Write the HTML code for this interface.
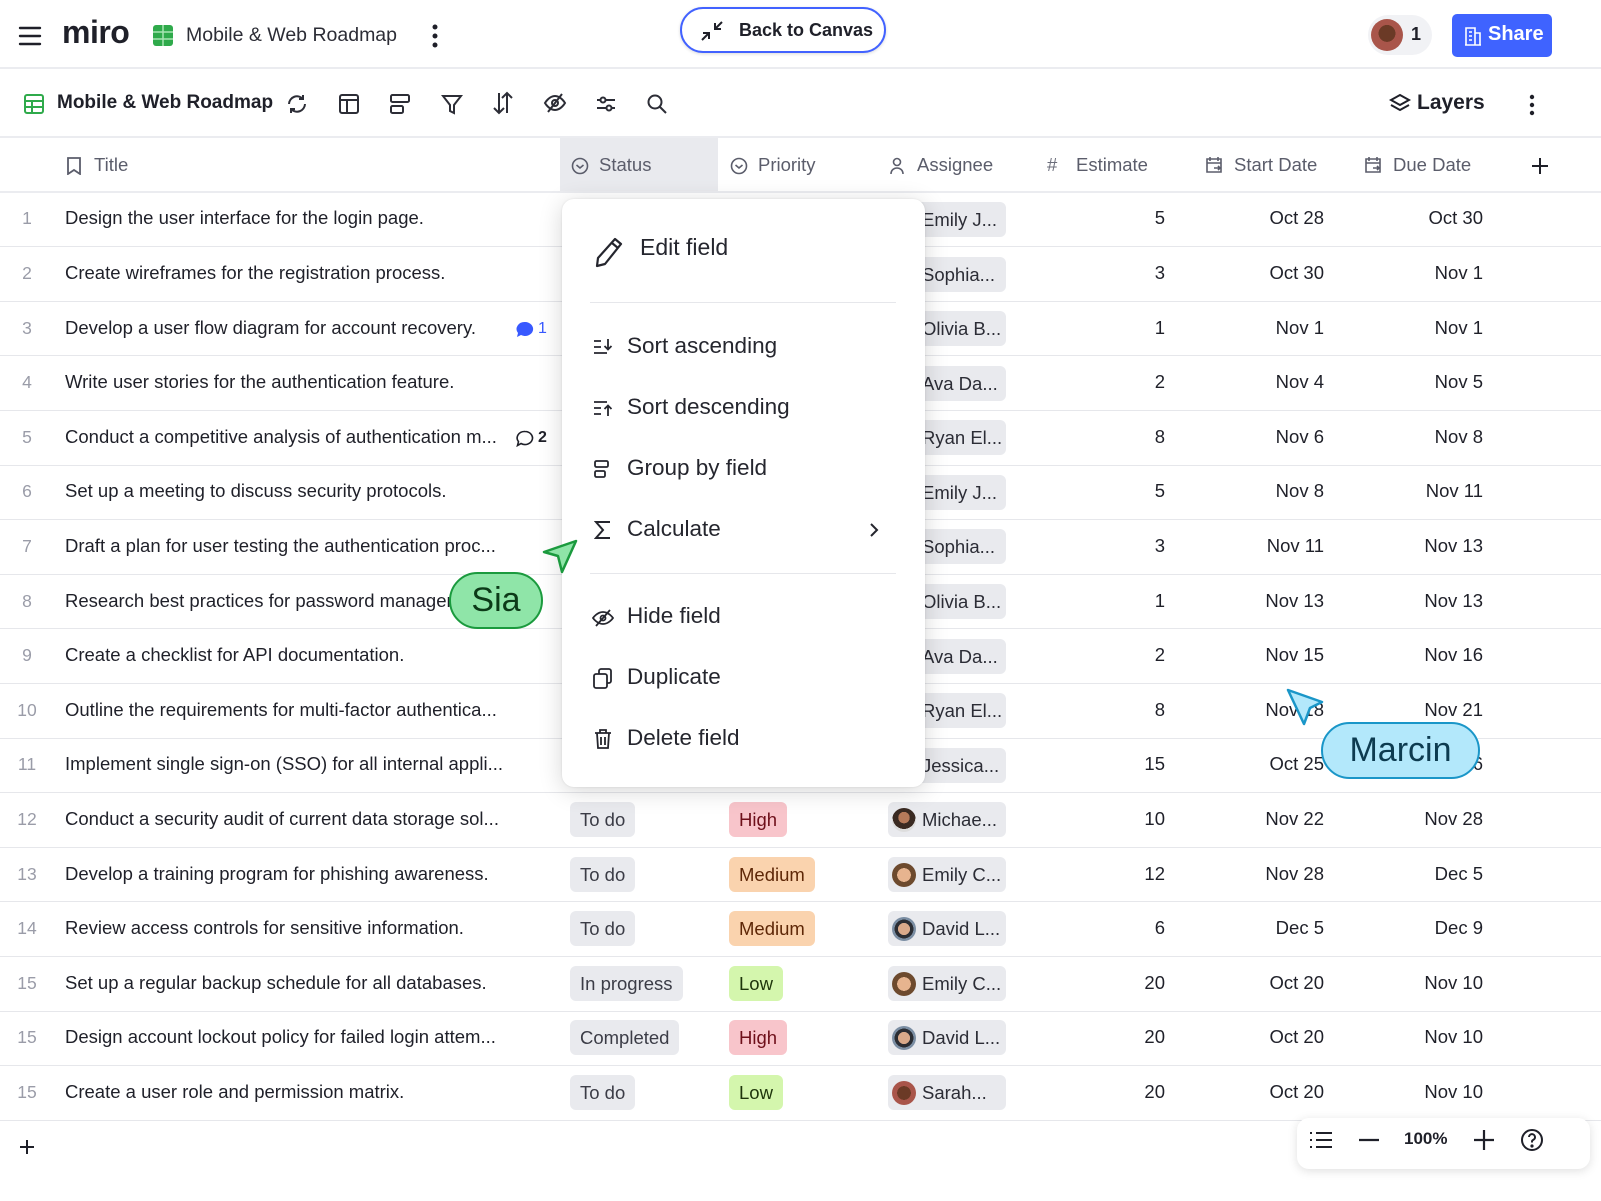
<!DOCTYPE html>
<html><head><meta charset="utf-8">
<style>
*{box-sizing:border-box;margin:0;padding:0}
body{width:1601px;height:1201px;background:#fff;font-family:"Liberation Sans",sans-serif;color:#1f2029;position:relative;overflow:hidden}
.a{position:absolute}
.hl{position:absolute;left:0;width:1601px;height:2px;background:#ebecf0}
.rl{position:absolute;left:0;width:1601px;height:1px;background:#e6e7eb}
.num{position:absolute;width:54px;text-align:center;color:#9a9ca8;font-size:17.5px}
.ttl{position:absolute;left:65px;font-size:18.5px;color:#1f2029;white-space:nowrap}
.pill{position:absolute;height:35px;border-radius:6px;padding:0 10px;font-size:18.5px;line-height:35px;white-space:nowrap}
.st{left:570px;background:#e9eaee;color:#3b3c46}
.pr{left:729px}
.hi{background:#f8c5cb;color:#6e0f1a}
.me{background:#fad3ae;color:#5e2707}
.lo{background:#d4f6ad;color:#1e350b}
.as{left:888px;width:118px;background:#e9eaee;color:#2c2d36;padding-left:34px;overflow:hidden}
.av{position:absolute;left:4px;top:6px;width:24px;height:24px;border-radius:50%}
.n{position:absolute;font-size:18.5px;text-align:right;white-space:nowrap}
.hd{position:absolute;top:154px;font-size:18.5px;color:#5b5d6b}
.mi{position:absolute;left:627px;font-size:22.5px;color:#25262e}
.ic{position:absolute}
</style></head><body>

<svg class="a" style="left:18px;top:25px" width="24" height="22" viewBox="0 0 24 22"><path d="M2 3h20M2 11h20M2 19h20" stroke="#1f2029" stroke-width="2.4" stroke-linecap="round"/></svg>
<div class="a" style="left:62px;top:14px;font-size:32px;font-weight:bold;letter-spacing:-0.5px;color:#1f2029">miro</div>
<svg class="a" style="left:153px;top:25px" width="20" height="21" viewBox="0 0 20 21"><rect x="0" y="0" width="20" height="21" rx="3" fill="#2faa4b"/><path d="M0 7h20M0 14h20M10 0v21" stroke="#a7e5b2" stroke-width="1.5"/></svg>
<div class="a" style="left:186px;top:24px;font-size:19.5px;color:#2c2d36">Mobile &amp; Web Roadmap</div>
<svg class="a" style="left:430px;top:23px" width="10" height="26"><circle cx="5" cy="4" r="2.5" fill="#1f2029"/><circle cx="5" cy="13" r="2.5" fill="#1f2029"/><circle cx="5" cy="22" r="2.5" fill="#1f2029"/></svg>
<div class="a" style="left:680px;top:7px;width:206px;height:46px;border:2px solid #4262ff;border-radius:23px;box-shadow:0 1px 3px rgba(0,0,0,.15)"></div>
<svg class="a" style="left:699px;top:19px" width="26" height="24" viewBox="0 0 26 24"><path d="M3 21l7-7M4 14h6v6M23 3l-7 7M22 10h-6V4" stroke="#1f2029" stroke-width="2" fill="none"/></svg>
<div class="a" style="left:739px;top:20px;font-size:18px;font-weight:bold;color:#1f2029">Back to Canvas</div>
<div class="a" style="left:1368px;top:15px;width:64px;height:40px;border-radius:20px;background:#f1f2f5"></div>
<div class="a" style="left:1371px;top:19px;width:32px;height:32px;border-radius:50%;background:radial-gradient(circle at 50% 45%,#6b3a26 0 35%,#a9554a 36%)"></div>
<div class="a" style="left:1411px;top:24px;font-size:18px;font-weight:bold">1</div>
<div class="a" style="left:1452px;top:14px;width:100px;height:43px;border-radius:5px;background:#3f63ff"></div>
<svg class="a" style="left:1464px;top:26px" width="18" height="20" viewBox="0 0 18 20"><path d="M2 19V2h9v17M11 7h5v12M1 19h16M5 6h3M5 10h3M5 14h3" stroke="#fff" stroke-width="1.6" fill="none"/></svg>
<div class="a" style="left:1488px;top:23px;font-size:20px;font-weight:bold;color:#fff">Share</div>
<div class="hl" style="top:67px"></div>

<svg class="a" style="left:24px;top:94px" width="20" height="20" viewBox="0 0 20 20"><rect x="1" y="1" width="18" height="18" rx="2" fill="none" stroke="#2faa4b" stroke-width="2"/><path d="M1 7h18M1 13h18M8 7v12" stroke="#2faa4b" stroke-width="2"/></svg>
<div class="a" style="left:57px;top:92px;font-size:19px;font-weight:bold;color:#1f2029">Mobile &amp; Web Roadmap</div>
<svg class="a" style="left:285px;top:92px" width="24" height="24" viewBox="0 0 24 24" fill="none" stroke="#2c2d36" stroke-width="2"><path d="M4 12a8 8 0 0 1 14-5M20 12a8 8 0 0 1-14 5M18 3v4h-4M6 21v-4h4"/></svg>
<svg class="a" style="left:338px;top:93px" width="22" height="22" viewBox="0 0 22 22" fill="none" stroke="#2c2d36" stroke-width="2"><rect x="2" y="2" width="18" height="18" rx="2"/><path d="M2 7h18M9 7v13"/></svg>
<svg class="a" style="left:389px;top:93px" width="22" height="22" viewBox="0 0 22 22" fill="none" stroke="#2c2d36" stroke-width="2"><rect x="2" y="2" width="18" height="7" rx="1.5"/><rect x="2" y="13" width="12" height="7" rx="1.5"/></svg>
<svg class="a" style="left:441px;top:93px" width="22" height="22" viewBox="0 0 22 22" fill="none" stroke="#2c2d36" stroke-width="2"><path d="M2 3h18l-7 9v8l-4-2v-6z"/></svg>
<svg class="a" style="left:492px;top:91px" width="22" height="24" viewBox="0 0 22 24" fill="none" stroke="#2c2d36" stroke-width="2"><path d="M7 2v20M2 17l5 5 5-5M15 22V2M10 7l5-5 5 5"/></svg>
<svg class="a" style="left:543px;top:92px" width="24" height="22" viewBox="0 0 24 22" fill="none" stroke="#2c2d36" stroke-width="2"><path d="M2 11s4-7 10-7 10 7 10 7-4 7-10 7S2 11 2 11z"/><circle cx="12" cy="11" r="3"/><path d="M19 2L5 20"/></svg>
<svg class="a" style="left:595px;top:94px" width="22" height="20" viewBox="0 0 22 20" fill="none" stroke="#2c2d36" stroke-width="2"><path d="M2 6h18M2 14h18"/><circle cx="8" cy="6" r="2.5" fill="#fff"/><circle cx="14" cy="14" r="2.5" fill="#fff"/></svg>
<svg class="a" style="left:646px;top:93px" width="22" height="22" viewBox="0 0 22 22" fill="none" stroke="#2c2d36" stroke-width="2"><circle cx="9" cy="9" r="6.5"/><path d="M14 14l6 6"/></svg>
<svg class="a" style="left:1388px;top:93px" width="24" height="22" viewBox="0 0 24 22" fill="none" stroke="#1f2029" stroke-width="2"><path d="M12 2l9 5-9 5-9-5z"/><path d="M3 12l9 5 9-5"/></svg>
<div class="a" style="left:1417px;top:91px;font-size:21px;font-weight:bold;color:#1f2029">Layers</div>
<svg class="a" style="left:1527px;top:94px" width="10" height="22"><circle cx="5" cy="3" r="2.2" fill="#1f2029"/><circle cx="5" cy="11" r="2.2" fill="#1f2029"/><circle cx="5" cy="19" r="2.2" fill="#1f2029"/></svg>
<div class="hl" style="top:136px"></div>

<div class="a" style="left:560px;top:138px;width:158px;height:54px;background:#e9eaee"></div>
<svg class="a" style="left:66px;top:157px" width="16" height="18" viewBox="0 0 16 18" fill="none" stroke="#5b5d6b" stroke-width="1.8"><path d="M2 1h12v16l-6-4-6 4z"/></svg>
<div class="hd" style="left:94px">Title</div>
<svg class="a" style="left:571px;top:157px" width="18" height="18" viewBox="0 0 18 18" fill="none" stroke="#5b5d6b" stroke-width="1.6"><circle cx="9" cy="9" r="7.5"/><path d="M5.5 8l3.5 3 3.5-3"/></svg>
<div class="hd" style="left:599px">Status</div>
<svg class="a" style="left:730px;top:157px" width="18" height="18" viewBox="0 0 18 18" fill="none" stroke="#5b5d6b" stroke-width="1.6"><circle cx="9" cy="9" r="7.5"/><path d="M5.5 8l3.5 3 3.5-3"/></svg>
<div class="hd" style="left:758px">Priority</div>
<svg class="a" style="left:889px;top:157px" width="16" height="18" viewBox="0 0 16 18" fill="none" stroke="#5b5d6b" stroke-width="1.6"><circle cx="8" cy="5" r="3.5"/><path d="M2 17c0-4 3-6 6-6s6 2 6 6"/></svg>
<div class="hd" style="left:917px">Assignee</div>
<div class="hd" style="left:1047px;color:#6b6d7a">#</div>
<div class="hd" style="left:1076px">Estimate</div>
<svg class="a" style="left:1205px;top:156px" width="18" height="18" viewBox="0 0 18 18" fill="none" stroke="#5b5d6b" stroke-width="1.6"><path d="M2 3h14v13H2zM2 7h14M5 1v4M13 1v4M9 12h6M13 10l2 2-2 2"/></svg>
<div class="hd" style="left:1234px">Start Date</div>
<svg class="a" style="left:1364px;top:156px" width="18" height="18" viewBox="0 0 18 18" fill="none" stroke="#5b5d6b" stroke-width="1.6"><path d="M2 3h14v13H2zM2 7h14M5 1v4M13 1v4M9 12h6M13 10l2 2-2 2"/></svg>
<div class="hd" style="left:1393px">Due Date</div>
<svg class="a" style="left:1531px;top:157px" width="18" height="18"><path d="M9 1v16M1 9h16" stroke="#1f2029" stroke-width="2"/></svg>
<div class="hl" style="top:191px"></div>

<div class="rl" style="top:246px"></div><div class="rl" style="top:301px"></div><div class="rl" style="top:355px"></div><div class="rl" style="top:410px"></div><div class="rl" style="top:465px"></div><div class="rl" style="top:519px"></div><div class="rl" style="top:574px"></div><div class="rl" style="top:628px"></div><div class="rl" style="top:683px"></div><div class="rl" style="top:738px"></div><div class="rl" style="top:792px"></div><div class="rl" style="top:847px"></div><div class="rl" style="top:901px"></div><div class="rl" style="top:956px"></div><div class="rl" style="top:1011px"></div><div class="rl" style="top:1065px"></div><div class="rl" style="top:1120px"></div>

<div class="num" style="top:208px">1</div><div class="ttl" style="top:207px">Design the user interface for the login page.</div>
<div class="num" style="top:263px">2</div><div class="ttl" style="top:262px">Create wireframes for the registration process.</div>
<div class="num" style="top:318px">3</div><div class="ttl" style="top:317px">Develop a user flow diagram for account recovery.</div>
<div class="num" style="top:372px">4</div><div class="ttl" style="top:371px">Write user stories for the authentication feature.</div>
<div class="num" style="top:427px">5</div><div class="ttl" style="top:426px">Conduct a competitive analysis of authentication m...</div>
<div class="num" style="top:481px">6</div><div class="ttl" style="top:480px">Set up a meeting to discuss security protocols.</div>
<div class="num" style="top:536px">7</div><div class="ttl" style="top:535px">Draft a plan for user testing the authentication proc...</div>
<div class="num" style="top:591px">8</div><div class="ttl" style="top:590px">Research best practices for password management.</div>
<div class="num" style="top:645px">9</div><div class="ttl" style="top:644px">Create a checklist for API documentation.</div>
<div class="num" style="top:700px">10</div><div class="ttl" style="top:699px">Outline the requirements for multi-factor authentica...</div>
<div class="num" style="top:754px">11</div><div class="ttl" style="top:753px">Implement single sign-on (SSO) for all internal appli...</div>
<div class="num" style="top:809px">12</div><div class="ttl" style="top:808px">Conduct a security audit of current data storage sol...</div>
<div class="num" style="top:864px">13</div><div class="ttl" style="top:863px">Develop a training program for phishing awareness.</div>
<div class="num" style="top:918px">14</div><div class="ttl" style="top:917px">Review access controls for sensitive information.</div>
<div class="num" style="top:973px">15</div><div class="ttl" style="top:972px">Set up a regular backup schedule for all databases.</div>
<div class="num" style="top:1027px">15</div><div class="ttl" style="top:1026px">Design account lockout policy for failed login attem...</div>
<div class="num" style="top:1082px">15</div><div class="ttl" style="top:1081px">Create a user role and permission matrix.</div>

<svg class="a" style="left:516px;top:321px" width="18" height="17" viewBox="0 0 18 17"><path d="M9 1a8 7 0 1 1-4 13l-4 2 1-4A8 7 0 0 1 9 1z" fill="#3859ff"/></svg>
<div class="a" style="left:538px;top:320px;font-size:16px;color:#3859ff">1</div>
<svg class="a" style="left:516px;top:430px" width="18" height="17" viewBox="0 0 18 17"><path d="M9 1.5a7.5 6.5 0 1 1-4 12l-3.5 2 1-3.8A7.5 6.5 0 0 1 9 1.5z" fill="none" stroke="#1f2029" stroke-width="1.6"/></svg>
<div class="a" style="left:538px;top:429px;font-size:16px;font-weight:bold">2</div>

<div class="pill st" style="top:802px">To do</div><div class="pill pr hi" style="top:802px">High</div>
<div class="pill st" style="top:857px">To do</div><div class="pill pr me" style="top:857px">Medium</div>
<div class="pill st" style="top:911px">To do</div><div class="pill pr me" style="top:911px">Medium</div>
<div class="pill st" style="top:966px">In progress</div><div class="pill pr lo" style="top:966px">Low</div>
<div class="pill st" style="top:1020px">Completed</div><div class="pill pr hi" style="top:1020px">High</div>
<div class="pill st" style="top:1075px">To do</div><div class="pill pr lo" style="top:1075px">Low</div>

<div class="pill as" style="top:202px">Emily J...</div>
<div class="pill as" style="top:257px">Sophia...</div>
<div class="pill as" style="top:311px">Olivia B...</div>
<div class="pill as" style="top:366px">Ava Da...</div>
<div class="pill as" style="top:420px">Ryan El...</div>
<div class="pill as" style="top:475px">Emily J...</div>
<div class="pill as" style="top:529px">Sophia...</div>
<div class="pill as" style="top:584px">Olivia B...</div>
<div class="pill as" style="top:639px">Ava Da...</div>
<div class="pill as" style="top:693px">Ryan El...</div>
<div class="pill as" style="top:748px">Jessica...</div>
<div class="pill as" style="top:802px"><span class="av" style="background:radial-gradient(circle at 50% 40%,#b67a5a 0 30%,#3a2a22 31% 60%,#ddd 61%)"></span>Michae...</div>
<div class="pill as" style="top:857px"><span class="av" style="background:radial-gradient(circle at 50% 50%,#e7b48f 0 40%,#6d4a2e 41%)"></span>Emily C...</div>
<div class="pill as" style="top:911px"><span class="av" style="background:radial-gradient(circle at 50% 50%,#d9a98a 0 35%,#2b2d33 36% 55%,#7b8ea3 56%)"></span>David L...</div>
<div class="pill as" style="top:966px"><span class="av" style="background:radial-gradient(circle at 50% 50%,#e7b48f 0 40%,#6d4a2e 41%)"></span>Emily C...</div>
<div class="pill as" style="top:1020px"><span class="av" style="background:radial-gradient(circle at 50% 50%,#d9a98a 0 35%,#2b2d33 36% 55%,#7b8ea3 56%)"></span>David L...</div>
<div class="pill as" style="top:1075px"><span class="av" style="background:radial-gradient(circle at 50% 50%,#6b3a26 0 40%,#a9554a 41%)"></span>Sarah...</div>

<div class="n" style="right:436px;top:207px">5</div><div class="n" style="right:277px;top:207px">Oct 28</div><div class="n" style="right:118px;top:207px">Oct 30</div>
<div class="n" style="right:436px;top:262px">3</div><div class="n" style="right:277px;top:262px">Oct 30</div><div class="n" style="right:118px;top:262px">Nov 1</div>
<div class="n" style="right:436px;top:317px">1</div><div class="n" style="right:277px;top:317px">Nov 1</div><div class="n" style="right:118px;top:317px">Nov 1</div>
<div class="n" style="right:436px;top:371px">2</div><div class="n" style="right:277px;top:371px">Nov 4</div><div class="n" style="right:118px;top:371px">Nov 5</div>
<div class="n" style="right:436px;top:426px">8</div><div class="n" style="right:277px;top:426px">Nov 6</div><div class="n" style="right:118px;top:426px">Nov 8</div>
<div class="n" style="right:436px;top:480px">5</div><div class="n" style="right:277px;top:480px">Nov 8</div><div class="n" style="right:118px;top:480px">Nov 11</div>
<div class="n" style="right:436px;top:535px">3</div><div class="n" style="right:277px;top:535px">Nov 11</div><div class="n" style="right:118px;top:535px">Nov 13</div>
<div class="n" style="right:436px;top:590px">1</div><div class="n" style="right:277px;top:590px">Nov 13</div><div class="n" style="right:118px;top:590px">Nov 13</div>
<div class="n" style="right:436px;top:644px">2</div><div class="n" style="right:277px;top:644px">Nov 15</div><div class="n" style="right:118px;top:644px">Nov 16</div>
<div class="n" style="right:436px;top:699px">8</div><div class="n" style="right:277px;top:699px">Nov 18</div><div class="n" style="right:118px;top:699px">Nov 21</div>
<div class="n" style="right:436px;top:753px">15</div><div class="n" style="right:277px;top:753px">Oct 25</div><div class="n" style="right:118px;top:753px">Nov 26</div>
<div class="n" style="right:436px;top:808px">10</div><div class="n" style="right:277px;top:808px">Nov 22</div><div class="n" style="right:118px;top:808px">Nov 28</div>
<div class="n" style="right:436px;top:863px">12</div><div class="n" style="right:277px;top:863px">Nov 28</div><div class="n" style="right:118px;top:863px">Dec 5</div>
<div class="n" style="right:436px;top:917px">6</div><div class="n" style="right:277px;top:917px">Dec 5</div><div class="n" style="right:118px;top:917px">Dec 9</div>
<div class="n" style="right:436px;top:972px">20</div><div class="n" style="right:277px;top:972px">Oct 20</div><div class="n" style="right:118px;top:972px">Nov 10</div>
<div class="n" style="right:436px;top:1026px">20</div><div class="n" style="right:277px;top:1026px">Oct 20</div><div class="n" style="right:118px;top:1026px">Nov 10</div>
<div class="n" style="right:436px;top:1081px">20</div><div class="n" style="right:277px;top:1081px">Oct 20</div><div class="n" style="right:118px;top:1081px">Nov 10</div>

<div class="a" style="left:562px;top:199px;width:363px;height:588px;background:#fff;border-radius:12px;box-shadow:0 4px 24px rgba(0,0,0,.16),0 0 2px rgba(0,0,0,.1)"></div>
<svg class="ic" style="left:595px;top:236px" width="28" height="32" viewBox="0 0 28 32" fill="none" stroke="#25262e" stroke-width="2.2" stroke-linejoin="round"><path d="M20 3l6 5-16 20-8 2 1-8z M17 7l6 5"/></svg>
<div class="a" style="left:640px;top:234px;font-size:23px;color:#25262e">Edit field</div>
<div class="a" style="left:590px;top:302px;width:306px;height:1px;background:#e6e7eb"></div>
<svg class="ic" style="left:593px;top:338px" width="20" height="18" viewBox="0 0 20 18" fill="none" stroke="#25262e" stroke-width="1.8"><path d="M1 3h7M1 9h7M1 15h13M15 1v10M11.5 8l3.5 3.5L18.5 8"/></svg>
<div class="mi" style="top:333px">Sort ascending</div>
<svg class="ic" style="left:593px;top:399px" width="20" height="18" viewBox="0 0 20 18" fill="none" stroke="#25262e" stroke-width="1.8"><path d="M1 3h13M1 9h7M1 15h7M15 17V7M11.5 10l3.5-3.5L18.5 10"/></svg>
<div class="mi" style="top:394px">Sort descending</div>
<svg class="ic" style="left:594px;top:460px" width="16" height="18" viewBox="0 0 16 18" fill="none" stroke="#25262e" stroke-width="1.8"><rect x="1" y="1" width="13" height="6" rx="1.5"/><rect x="1" y="11" width="10" height="6" rx="1.5"/></svg>
<div class="mi" style="top:455px">Group by field</div>
<svg class="ic" style="left:594px;top:520px" width="18" height="20" viewBox="0 0 18 20" fill="none" stroke="#25262e" stroke-width="2"><path d="M16 2H2l7 8-7 8h14"/></svg>
<div class="mi" style="top:516px">Calculate</div>
<svg class="ic" style="left:869px;top:522px" width="10" height="16" viewBox="0 0 10 16" fill="none" stroke="#25262e" stroke-width="2"><path d="M2 2l6 6-6 6"/></svg>
<div class="a" style="left:590px;top:573px;width:306px;height:1px;background:#e6e7eb"></div>
<svg class="ic" style="left:592px;top:608px" width="22" height="20" viewBox="0 0 22 20" fill="none" stroke="#25262e" stroke-width="1.8"><path d="M1 10s4-6 10-6 10 6 10 6-4 6-10 6S1 10 1 10z"/><circle cx="11" cy="10" r="2.5"/><path d="M18 2L4 18"/></svg>
<div class="mi" style="top:603px">Hide field</div>
<svg class="ic" style="left:593px;top:668px" width="20" height="21" viewBox="0 0 20 21" fill="none" stroke="#25262e" stroke-width="1.8"><rect x="1" y="6" width="13" height="14" rx="2"/><path d="M6 6V3a2 2 0 0 1 2-2h8a2 2 0 0 1 2 2v10a2 2 0 0 1-2 2h-2"/></svg>
<div class="mi" style="top:664px">Duplicate</div>
<svg class="ic" style="left:594px;top:728px" width="18" height="22" viewBox="0 0 18 22" fill="none" stroke="#25262e" stroke-width="1.8"><path d="M1 5h16M6 5V2h6v3M3 5l1 15h10l1-15M7 9v8M11 9v8"/></svg>
<div class="mi" style="top:725px">Delete field</div>

<svg class="a" style="left:540px;top:536px" width="42" height="42" viewBox="0 0 42 42"><path d="M36 5L4 16l14 4 4 16z" fill="#8fe5a8" stroke="#1b9a3e" stroke-width="2.5" stroke-linejoin="round"/></svg>
<div class="a" style="left:449px;top:572px;width:94px;height:57px;border-radius:29px;background:#8fe5a8;border:2.5px solid #1b9a3e;text-align:center;font-size:34px;line-height:52px;color:#0c3a18">Sia</div>

<svg class="a" style="left:1284px;top:686px" width="42" height="42" viewBox="0 0 42 42"><path d="M4 4l34 12-12 6-6 16z" fill="#b3e8fb" stroke="#1a96c8" stroke-width="2.5" stroke-linejoin="round"/></svg>
<div class="a" style="left:1321px;top:722px;width:159px;height:57px;border-radius:29px;background:#b3e8fb;border:2.5px solid #1a96c8;text-align:center;font-size:34px;line-height:52px;color:#0d3b50">Marcin</div>

<svg class="a" style="left:19px;top:1139px" width="16" height="16"><path d="M8 1v14M1 8h14" stroke="#1f2029" stroke-width="2"/></svg>
<div class="a" style="left:1297px;top:1118px;width:293px;height:51px;border-radius:12px;background:#fff;box-shadow:0 2px 10px rgba(0,0,0,.13)"></div>
<svg class="a" style="left:1309px;top:1130px" width="24" height="20" viewBox="0 0 24 20" stroke="#1f2029" stroke-width="2"><path d="M1 3h2M7 3h16M1 10h2M7 10h16M1 17h2M7 17h16"/></svg>
<svg class="a" style="left:1358px;top:1138px" width="22" height="4"><path d="M1 2h20" stroke="#1f2029" stroke-width="2.2"/></svg>
<div class="a" style="left:1404px;top:1129px;font-size:17px;font-weight:bold;color:#1f2029">100%</div>
<svg class="a" style="left:1473px;top:1129px" width="22" height="22"><path d="M11 1v20M1 11h20" stroke="#1f2029" stroke-width="2.2"/></svg>
<svg class="a" style="left:1520px;top:1128px" width="24" height="24" viewBox="0 0 24 24" fill="none" stroke="#1f2029" stroke-width="2"><circle cx="12" cy="12" r="10"/><path d="M9 9a3 3 0 1 1 4 3c-1 .5-1 1-1 2.5"/><circle cx="12" cy="18" r=".6" fill="#1f2029"/></svg>

</body></html>
